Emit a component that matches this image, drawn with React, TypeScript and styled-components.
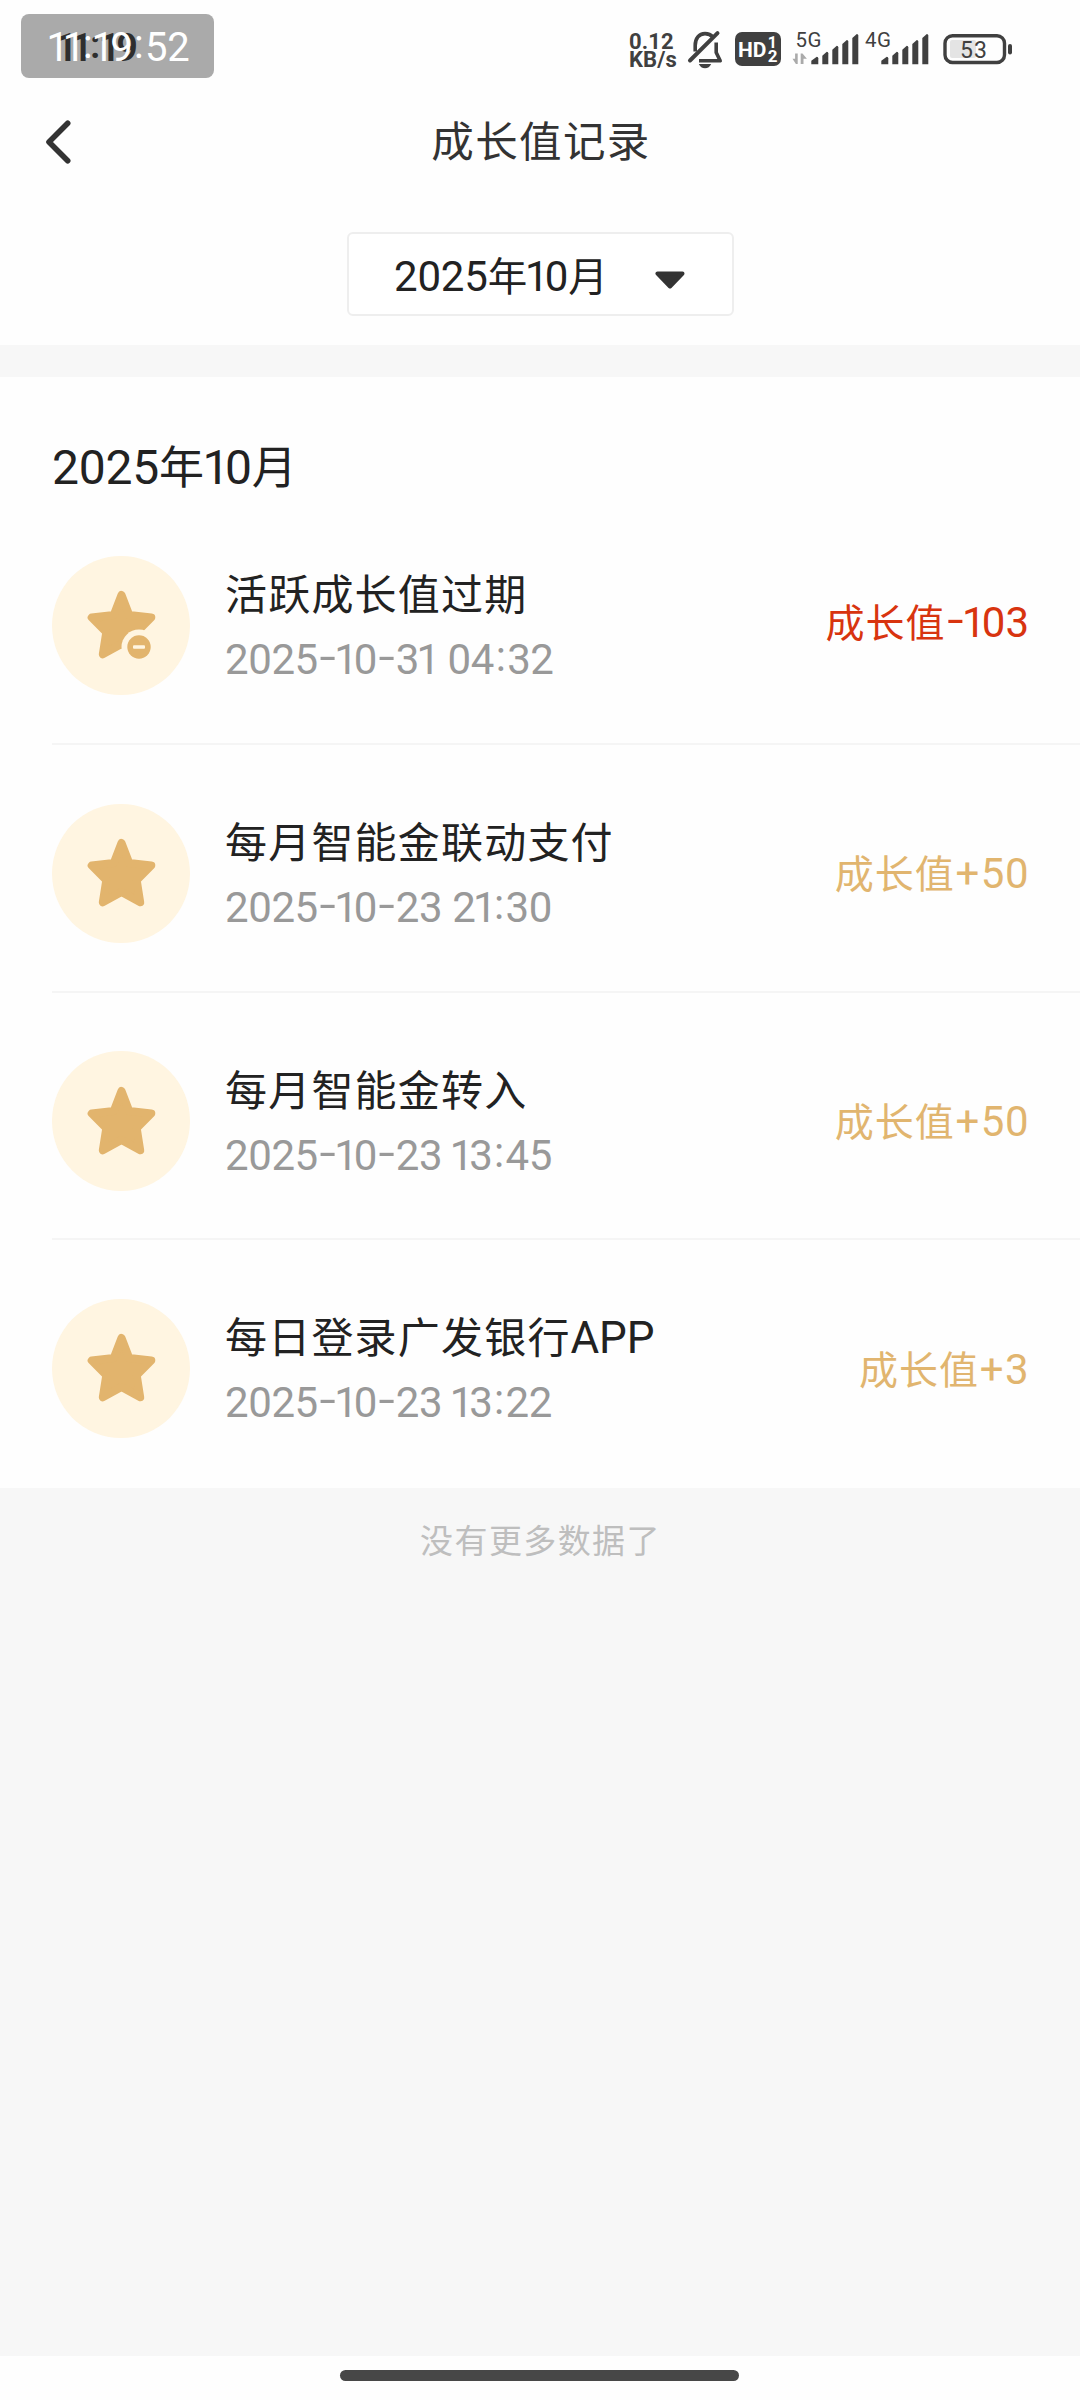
import React from 'react';
import styled, { createGlobalStyle, css } from 'styled-components';

const GlobalStyle = createGlobalStyle`
  * { box-sizing: border-box; }
  body {
    margin: 0;
    background: #fff;
    font-family: Roboto, "Noto Sans CJK SC", sans-serif;
    font-kerning: none;
  }
  svg { display: block; flex: none; }
`;

const Page = styled.div`
  display: flex;
  flex-direction: column;
  width: 1080px;
  height: 2400px;
  background: #fefefe;
  overflow: hidden;
`;

/* ---------- numerals ---------- */

type GlyphKind = 'digit' | 'one' | 'oneBeforeSpace' | 'dash' | 'colon' | 'plus';

const glyphStyles = {
  digit: css``,
  one: css`margin: 0 -0.09em 0 -0.06em;`,
  oneBeforeSpace: css`margin: 0 -0.05em 0 -0.06em;`,
  dash: css`
    display: inline-block;
    width: 0.45em;
    text-align: center;
    transform: translateY(-0.07em) scaleX(1.4);
  `,
  colon: css`
    position: relative;
    top: -0.07em;
    margin: 0 0.04em;
  `,
  plus: css`margin: 0 0.02em;`,
};

const Glyph = styled.span<{ $kind: GlyphKind }>`
  line-height: 1;
  ${({ $kind }) => glyphStyles[$kind]}
`;

const Numerals = styled.span<{ $size: number; $spacing?: number }>`
  font-size: ${({ $size }) => $size}px;
  letter-spacing: ${({ $spacing = -0.2 }) => $spacing}px;
  line-height: 1;
  white-space: pre;
`;

const kindOf = (text: string, next?: string): GlyphKind => {
  if (text === '1') return next?.startsWith(' ') ? 'oneBeforeSpace' : 'one';
  if (text === '-') return 'dash';
  if (text === ':') return 'colon';
  if (text === '+') return 'plus';
  return 'digit';
};

function Num({ text, size, spacing }: { text: string; size: number; spacing?: number }) {
  const parts: string[] = text.match(/1|-|:|\+|[^1\-:+]+/g) ?? [];
  return (
    <Numerals $size={size} $spacing={spacing}>
      {parts.map((part, i) => (
        <Glyph key={i} $kind={kindOf(part, parts[i + 1])}>{part}</Glyph>
      ))}
    </Numerals>
  );
}

/* ---------- status bar ---------- */

const StatusBar = styled.div`
  display: flex;
  align-items: flex-start;
  height: 92px;
  flex: none;
  padding: 14px 68px 0 21px;
`;

const TimePill = styled.div`
  position: relative;
  width: 193px;
  height: 64px;
  border-radius: 8px;
  background: #aaa;
`;

const SystemTime = styled.div`
  position: absolute;
  left: 37px;
  top: 14.5px;
  line-height: 48px;
  font-weight: 600;
  color: #2e2e2e;
`;

const OverlayTime = styled.div`
  position: absolute;
  left: 28px;
  top: 13.5px;
  line-height: 48px;
  color: #fff;
`;

const StatusIcons = styled.div`
  display: flex;
  align-items: flex-start;
  margin-left: auto;
  padding-top: 16px;
`;

const Speed = styled.div`
  display: flex;
  flex-direction: column;
  width: 49px;
  margin-right: 10px;
  font-weight: 700;
  color: #404040;
`;

const SpeedLine = styled.div`
  height: 18px;
  font-size: 22px;
  line-height: 23px;
  letter-spacing: 0.1px;
  white-space: nowrap;
`;

const Icon = styled.svg<{ $gap?: number }>`
  margin-right: ${({ $gap = 0 }) => $gap}px;
  font-family: Roboto, sans-serif;
  overflow: visible;
`;

const INK = '#404040';

function BellOff() {
  return (
    <Icon $gap={13} width="34" height="38" viewBox="0 0 34 38" fill="none">
      <path d="M7.2 21.5V15.5C7.2 8.5 11 3.6 17 3.6c3.4 0 6 1.2 7.8 3.4" stroke={INK} strokeWidth="3.6" />
      <path d="M28.2 12.5v10l4 8.3H11" stroke={INK} strokeWidth="3.6" strokeLinejoin="round" />
      <path d="M2 30.5 L29.5 3.2" stroke={INK} strokeWidth="4" strokeLinecap="round" />
      <path d="M10.8 34h12.4c-1.2 2.8-3.4 4.2-6.2 4.2s-5-1.400-6.200-4.200z" fill={INK} />
    </Icon>
  );
}

function HdBadge() {
  return (
    <Icon $gap={11} width="46" height="38" viewBox="0 0 46 38" fill="#fff" fontWeight="700">
      <rect x="0" y="2" width="46" height="34" rx="7" fill={INK} />
      <text x="3" y="26.700" fontSize="21" textLength="28.500">HD</text>
      <text x="32.800" y="17.800" fontSize="16">1</text>
      <text x="32.800" y="32" fontSize="17">2</text>
    </Icon>
  );
}

function Signal({ label, labelX, width, barsX, gap, data }: {
  label: string; labelX: number; width: number; barsX: number; gap: number; data?: boolean;
}) {
  const tops = [26.7, 21.7, 15.7, 10, 4];
  return (
    <Icon $gap={gap} width={width} height="38" viewBox={`0 0 ${width} 38`} fill={INK}>
      <text x={labelX} y="17" fontSize="20.500" textLength="26">{label}</text>
      {data && (
        <path d="M5.700 23.500v10.500h-1.800L0.500 28.800h2.600v-5.300zM8.700 34V23.500h1.800l4.400 5.200h-3.400V34z" fill="#aaa" />
      )}
      {tops.map((top, i) => {
        const x = barsX + (i === 0 ? 0 : 1 + i * 10);
        const w = i === 0 ? 7 : 6;
        return (
          <path
            key={top}
            d={`M${x} ${top + 4} L${x + w - 1.500} ${top} Q${x + w} ${top} ${x + w} ${top + 1.500} V34.300 H${x} Z`}
          />
        );
      })}
    </Icon>
  );
}

function Battery() {
  return (
    <Icon width="69" height="38" viewBox="0 0 69 38">
      <rect x="2" y="5.700" width="59.500" height="26.800" rx="7.500" fill="none" stroke={INK} strokeWidth="3.400" />
      <rect x="7" y="10" width="26" height="18" rx="2" fill="#e4e4e4" />
      <rect x="65" y="14" width="4" height="10.500" rx="2" fill={INK} />
      <text x="17" y="27.500" fontSize="23" textLength="27" fill={INK}>53</text>
    </Icon>
  );
}

/* ---------- header and filter ---------- */

const Header = styled.header`
  display: grid;
  grid-template-columns: 80px 1fr 80px;
  align-items: center;
  height: 100px;
  flex: none;
`;

const BackButton = styled.button`
  display: flex;
  width: 80px;
  height: 100px;
  padding: 28px 0 0 42px;
  border: 0;
  background: none;
`;

const Title = styled.h1`
  margin: 0;
  padding: 2px 0 0 2px;
  text-align: center;
  font-size: 42.5px;
  font-weight: 400;
  line-height: 60px;
  letter-spacing: 1.4px;
  color: #333;
`;

const FilterBar = styled.div`
  display: flex;
  justify-content: center;
  height: 153px;
  flex: none;
  padding-top: 40px;
`;

const MonthSelect = styled.button`
  display: flex;
  align-items: center;
  justify-content: space-between;
  width: 387px;
  height: 84px;
  padding: 8px 47px 0 45.5px;
  border: 2px solid #eee;
  border-radius: 6px;
  background: #fff;
  font-family: inherit;
  font-size: 39.5px;
  line-height: 60px;
  letter-spacing: 0.5px;
  color: #222;
`;

const Caret = styled.svg`
  margin-top: 4px;
`;

const Band = styled.div`
  height: 32px;
  flex: none;
  background: #f7f7f7;
`;

/* ---------- records ---------- */

const Records = styled.main`
  height: 1111px;
  flex: none;
  padding: 61.5px 0 0 52px;
`;

const MonthHeading = styled.h2`
  height: 58.8px;
  margin: 0;
  font-size: 45px;
  font-weight: 400;
  line-height: 60px;
  letter-spacing: 1.2px;
  color: #222;
`;

const Row = styled.div`
  display: flex;
  align-items: flex-start;
  height: 247.66px;
  border-bottom: 2px solid #f5f5f5;
  &:last-child { border-bottom: 0; }
`;

const Medal = styled.div`
  display: flex;
  width: 138px;
  height: 139.5px;
  flex: none;
  margin: 58.7px 0 0 0;
  padding: 0.5px 0 0 0.5px;
  border-radius: 50%;
  background: #fff5e1;
`;

const Info = styled.div`
  display: flex;
  flex-direction: column;
  gap: 4px;
  padding: 69px 0 0 35px;
`;

const ItemTitle = styled.div`
  height: 60px;
  font-size: 42px;
  line-height: 60px;
  letter-spacing: 1.2px;
  color: #222;
  white-space: nowrap;
`;

const ItemDate = styled.div`
  height: 60px;
  font-size: 42px;
  line-height: 60px;
  color: #999;
`;

const Amount = styled.div<{ $negative: boolean }>`
  height: 60px;
  margin: ${({ $negative }) => ($negative ? 97 : 100.5)}px 51px 0 auto;
  font-size: 39px;
  line-height: 60px;
  letter-spacing: 1px;
  white-space: nowrap;
  color: ${({ $negative }) => ($negative ? '#d8340f' : '#e1b56f')};
`;

const Footer = styled.footer`
  flex: 1;
  padding: 24px 0 0 1px;
  background: #f7f7f7;
  text-align: center;
  font-size: 33px;
  line-height: 60px;
  letter-spacing: 1.4px;
  color: #bebebe;
`;

const HomeBar = styled.div`
  display: flex;
  justify-content: center;
  height: 44px;
  flex: none;
  padding: 14px 1px 0 0;
`;

const HomeHandle = styled.div`
  width: 399px;
  height: 10.5px;
  border-radius: 6px;
  background: #474747;
`;

function Star({ minus }: { minus: boolean }) {
  return (
    <svg width="138" height="138" viewBox="0 0 138 138">
      <path
        d="M68.500 39 L76.200 59 L98.300 61.500 L83.700 76.200 L87.200 98.300 L68.500 88 L49.800 98.300 L53.300 76.200 L38.700 61.500 L60.800 59 Z"
        fill="#e2b46d"
        stroke="#e2b46d"
        strokeWidth="8"
        strokeLinejoin="round"
      />
      {minus && (
        <>
          <circle cx="86" cy="91" r="17.500" fill="#fff5e1" />
          <circle cx="86" cy="91" r="11.700" fill="#e2b46d" />
          <rect x="80" y="89.300" width="12" height="3.400" rx="1" fill="#fff5e1" />
        </>
      )}
    </svg>
  );
}

interface RecordItem {
  title: string;
  suffix?: string;
  date: string;
  amount: string;
}

const records: RecordItem[] = [
  { title: '活跃成长值过期', date: '2025-10-31 04:32', amount: '-103' },
  { title: '每月智能金联动支付', date: '2025-10-23 21:30', amount: '+50' },
  { title: '每月智能金转入', date: '2025-10-23 13:45', amount: '+50' },
  { title: '每日登录广发银行', suffix: 'APP', date: '2025-10-23 13:22', amount: '+3' },
];

function MonthLabel({ size }: { size: number }) {
  return (
    <span>
      <Num text="2025" size={size} />年<Num text="10" size={size} />月
    </span>
  );
}

export default function App() {
  return (
    <Page>
      <GlobalStyle />
      <StatusBar>
        <TimePill>
          <SystemTime><Num text="11:19" size={38} spacing={-0.8} /></SystemTime>
          <OverlayTime><Num text="11:19:52" size={40} spacing={-0.3} /></OverlayTime>
        </TimePill>
        <StatusIcons>
          <Speed>
            <SpeedLine>0.12</SpeedLine>
            <SpeedLine>KB/s</SpeedLine>
          </Speed>
          <BellOff />
          <HdBadge />
          <Signal label="5G" labelX={3.5} width={67} barsX={19.3} gap={6} data />
          <Signal label="4G" labelX={0} width={63} barsX={16.3} gap={15} />
          <Battery />
        </StatusIcons>
      </StatusBar>

      <Header>
        <BackButton aria-label="返回">
          <svg width="30" height="44" viewBox="0 0 30 44" fill="none">
            <path d="M25.700 3.300 L7 22 L25.700 40.700" stroke="#333" strokeWidth="5.600" strokeLinecap="round" strokeLinejoin="round" />
          </svg>
        </BackButton>
        <Title>成长值记录</Title>
      </Header>

      <FilterBar>
        <MonthSelect>
          <MonthLabel size={42} />
          <Caret width="30" height="18" viewBox="0 0 30 18">
            <path d="M2.500 2.500 H27.500 L15 15.500 Z" fill="#333" stroke="#333" strokeWidth="4" strokeLinejoin="round" />
          </Caret>
        </MonthSelect>
      </FilterBar>
      <Band />

      <Records>
        <MonthHeading><MonthLabel size={48} /></MonthHeading>
        {records.map((item) => {
          const negative = item.amount.startsWith('-');
          return (
            <Row key={item.date}>
              <Medal><Star minus={negative} /></Medal>
              <Info>
                <ItemTitle>
                  {item.title}
                  {item.suffix && <Num text={item.suffix} size={44} />}
                </ItemTitle>
                <ItemDate><Num text={item.date} size={42} spacing={-0.4} /></ItemDate>
              </Info>
              <Amount $negative={negative}>
                成长值<Num text={item.amount} size={42} spacing={negative ? 0 : 0.5} />
              </Amount>
            </Row>
          );
        })}
      </Records>

      <Footer>没有更多数据了</Footer>
      <HomeBar><HomeHandle /></HomeBar>
    </Page>
  );
}
